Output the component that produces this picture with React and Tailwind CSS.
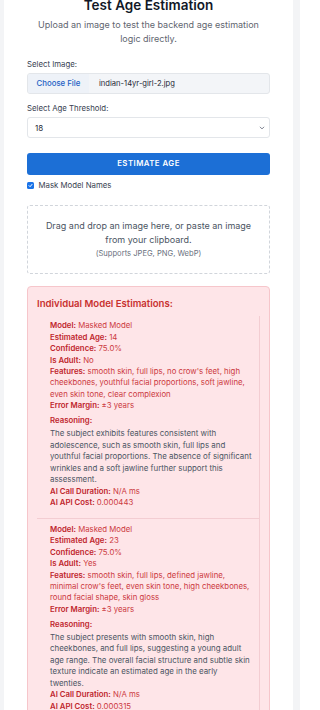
import React from "react";

function Row({ label, children }) {
  return (
    <div className="whitespace-nowrap">
      <span className="font-semibold text-[#c0262d]">{label}</span>{" "}
      <span className="text-[#cc3a3f]">{children}</span>
    </div>
  );
}

function Item({ age, adult, features, reasoning, cost }) {
  return (
    <div className="pl-[13px] pr-[5px] pt-[4.3px] pb-[10px] border-r border-b border-[#f3cdd2] text-[7.8px] leading-[11.43px]">
      <Row label="Model:">Masked Model</Row>
      <Row label="Estimated Age:">{age}</Row>
      <Row label="Confidence:">75.0%</Row>
      <Row label="Is Adult:">{adult}</Row>
      <Row label="Features:">{features[0]}</Row>
      {features.slice(1).map((l) => (
        <div key={l} className="whitespace-nowrap text-[#cc3a3f]">{l}</div>
      ))}
      <Row label="Error Margin:">±3 years</Row>
      <div className="mt-[3.6px] font-semibold text-[#c0262d]">Reasoning:</div>
      <div className="mt-[1.6px] text-[#4b5563] text-[7.9px]">
        {reasoning.map((l) => (
          <div key={l} className="whitespace-nowrap">{l}</div>
        ))}
      </div>
      <Row label="AI Call Duration:">N/A ms</Row>
      <Row label="AI API Cost:">{cost}</Row>
    </div>
  );
}

export default function App() {
  return (
    <div className="w-[300px] h-[710px] overflow-hidden bg-[#f3f4f6] pl-[4px] pr-[7px] [font-family:Inter,'Noto_Sans',sans-serif]">
      <div className="bg-white px-[23px] -mt-[4.5px] pb-[40px] min-h-[760px]">
        <h1 className="text-center text-[13.5px] leading-[18px] font-semibold text-[#111827]">
          Test Age Estimation
        </h1>
        <p className="mt-[4.5px] text-center text-[9px] leading-[14px] text-[#5f6670]">
          Upload an image to test the backend age estimation logic directly.
        </p>

        <label className="block mt-[13.3px] text-[7.8px] leading-[11.4px] text-[#374151]">
          Select Image:
        </label>
        <div className="mt-[2.3px] h-[21px] flex border border-[#e3e6ea] rounded-[3px] bg-[#f3f5f8] overflow-hidden">
          <span className="w-[61px] flex items-center justify-center text-[#1d5fc4] text-[7.8px] font-medium bg-[#eef2f8]">
            Choose File
          </span>
          <span className="pl-[10px] flex items-center text-[7.6px] text-[#1f2937]">
            indian-14yr-girl-2.jpg
          </span>
        </div>

        <label className="block mt-[9.3px] text-[7.8px] leading-[11.4px] text-[#374151]">
          Select Age Threshold:
        </label>
        <div className="mt-[2.3px] h-[21px] flex items-center justify-between border border-[#e3e6ea] rounded-[3px] bg-white pl-[7px] pr-[4px]">
          <span className="text-[8px] text-[#1f2937]">18</span>
          <svg width="6" height="6" viewBox="0 0 10 10" fill="none" stroke="#6b7280" strokeWidth="1.5" strokeLinecap="round" strokeLinejoin="round">
            <path d="M2 3.5 L5 6.5 L8 3.5" />
          </svg>
        </div>

        <button className="mt-[15px] h-[22px] w-full rounded-[3px] bg-[#1c6fd6] text-white text-[7.8px] font-semibold tracking-[0.06em] uppercase">
          Estimate Age
        </button>

        <div className="mt-[5px] flex items-center gap-[5px] h-[11px]">
          <span className="w-[6.5px] h-[6.5px] rounded-[1.5px] bg-[#1a73e8] flex items-center justify-center">
            <svg width="5" height="5" viewBox="0 0 10 10" fill="none" stroke="white" strokeWidth="2" strokeLinecap="round" strokeLinejoin="round">
              <path d="M2 5.2 L4.2 7.4 L8 2.8" />
            </svg>
          </span>
          <span className="text-[7.8px] text-[#374151]">Mask Model Names</span>
        </div>

        <div className="mt-[14px] h-[69px] border border-dashed border-[#d1d5db] rounded-[3px] flex flex-col items-center justify-center text-center text-[#4b5563]">
          <div className="text-[9px] leading-[14px] px-[12px]">
            Drag and drop an image here, or paste an image from your clipboard.
          </div>
          <div className="text-[7.6px] leading-[14px] text-[#6b7280]">(Supports JPEG, PNG, WebP)</div>
        </div>

        <div className="mt-[12px] border border-[#f6c6cb] bg-[#fee5e8] rounded-[4px] px-[9px] pt-[10px] pb-[12px]">
          <h2 className="text-[9.6px] leading-[14px] font-semibold text-[#c8312f]">
            Individual Model Estimations:
          </h2>
          <div className="mt-[5px]">
            <Item
              age="14"
              adult="No"
              features={[
                "smooth skin, full lips, no crow's feet, high",
                "cheekbones, youthful facial proportions, soft jawline,",
                "even skin tone, clear complexion",
              ]}
              reasoning={[
                "The subject exhibits features consistent with",
                "adolescence, such as smooth skin, full lips and",
                "youthful facial proportions. The absence of significant",
                "wrinkles and a soft jawline further support this",
                "assessment.",
              ]}
              cost="0.000443"
            />
            <Item
              age="23"
              adult="Yes"
              features={[
                "smooth skin, full lips, defined jawline,",
                "minimal crow's feet, even skin tone, high cheekbones,",
                "round facial shape, skin gloss",
              ]}
              reasoning={[
                "The subject presents with smooth skin, high",
                "cheekbones, and full lips, suggesting a young adult",
                "age range. The overall facial structure and subtle skin",
                "texture indicate an estimated age in the early",
                "twenties.",
              ]}
              cost="0.000315"
            />
          </div>
        </div>
      </div>
    </div>
  );
}
